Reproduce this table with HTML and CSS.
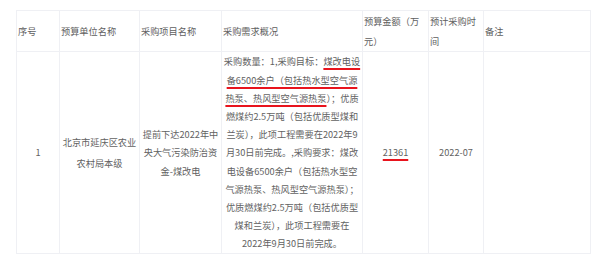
FILE: index.html
```html
<!DOCTYPE html>
<html lang="zh-CN">
<head>
<meta charset="utf-8">
<link rel="stylesheet" href="styles.css">
</head>
<body>
<table class="grid">
  <colgroup>
    <col class="c1"><col class="c2"><col class="c3"><col class="c4"><col class="c5"><col class="c6"><col class="c7">
  </colgroup>
  <thead>
    <tr>
      <th>序号</th>
      <th>预算单位名称</th>
      <th>采购项目名称</th>
      <th>采购需求概况</th>
      <th>预算金额（万元）</th>
      <th>预计采购时间</th>
      <th>备注</th>
    </tr>
  </thead>
  <tbody>
    <tr>
      <td>1</td>
      <td class="unit">北京市延庆区农业农村局本级</td>
      <td class="proj">提前下达2022年中央大气污染防治资金-煤改电</td>
      <td class="need">采购数量：1,采购目标：<span class="mark">煤改电设<br>备6500余户（包括热水型空气源<br>热泵、热风型空气源热泵</span>）；优质<br>燃煤约2.5万吨（包括优质型煤和<br>兰炭），此项工程需要在2022年9<br>月30日前完成。,采购要求：煤改<br>电设备6500余户（包括热水型空<br>气源热泵、热风型空气源热泵）；<br>优质燃煤约2.5万吨（包括优质型<br>煤和兰炭），此项工程需要在<br>2022年9月30日前完成。</td>
      <td><span class="mark">21361</span></td>
      <td>2022-07</td>
      <td></td>
    </tr>
  </tbody>
</table>
</body>
</html>
```

FILE: styles.css
```css
html, body {
  margin: 0;
  padding: 0;
  background: #fff;
}

body {
  padding: 10px 0 0 16px;
  font-family: "Noto Sans CJK SC", "Microsoft YaHei", sans-serif;
  font-size: 9.2px;
  color: #626262;
}

.grid {
  border-collapse: collapse;
  table-layout: fixed;
  width: 574px;
}

.c1 { width: 43px; }
.c2 { width: 80px; }
.c3 { width: 82px; }
.c4 { width: 141px; }
.c5 { width: 66px; }
.c6 { width: 55px; }
.c7 { width: 107px; }

.grid th,
.grid td {
  border: 1px solid #eff0f4;
  padding: 0 1px;
  vertical-align: middle;
}

.grid th {
  height: 37px;
  font-weight: normal;
  text-align: left;
  line-height: 20px;
  color: #5e5e5e;
}

.grid td {
  height: 201px;
  text-align: center;
  line-height: 18.2px;
}

.grid td.unit {
  line-height: 21px;
}

.grid td.need {
  white-space: nowrap;
}

.mark {
  text-decoration-line: underline;
  text-decoration-color: #e8141d;
  text-decoration-thickness: 2px;
  text-underline-offset: 3px;
}
```
